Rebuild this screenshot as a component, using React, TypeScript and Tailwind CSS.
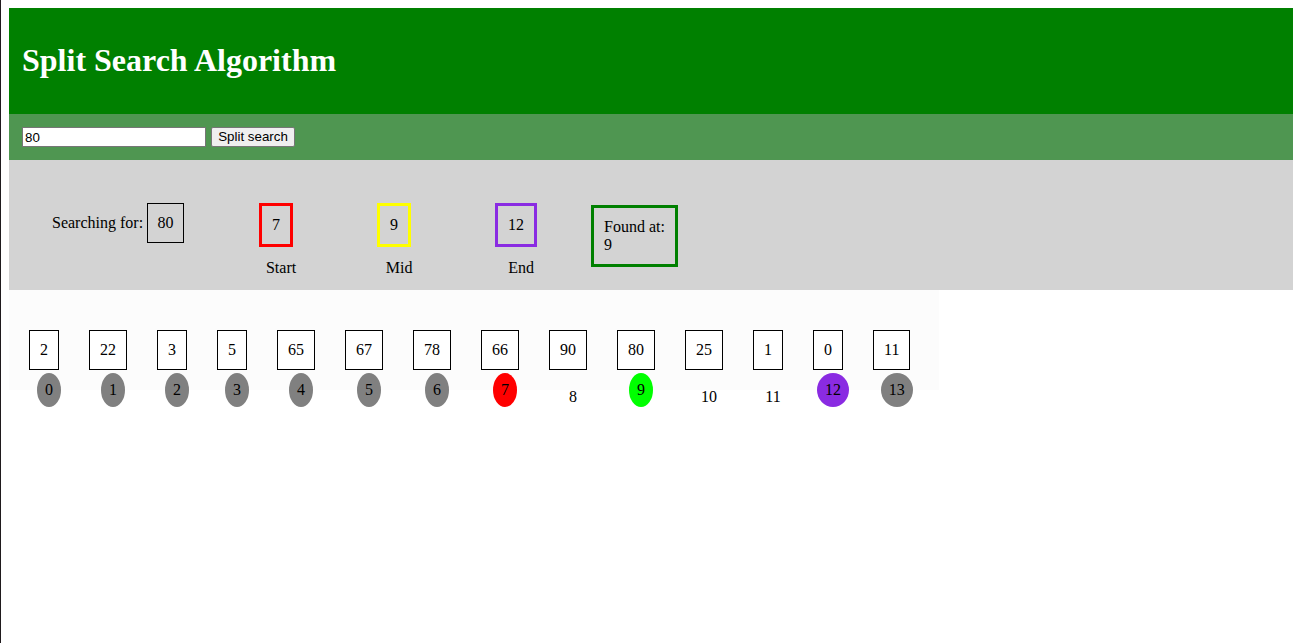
import React from 'react';

const values = [2, 22, 3, 5, 65, 67, 78, 66, 90, 80, 25, 1, 0, 11];

// index badge look per position (start / mid / end / outside range)
const badgeClass: Record<string, string> = {
  out: 'mt-[3px] p-[8px] rounded-[50%] bg-[#808080]',
  start: 'mt-[3px] p-[8px] rounded-[50%] bg-[#ff0000]',
  mid: 'mt-[3px] p-[8px] rounded-[50%] bg-[#00ff00]',
  end: 'mt-[3px] p-[8px] rounded-[50%] bg-[#8a2be2]',
  plain: 'mt-[18px]',
};

function kindFor(i: number) {
  if (i === 7) return 'start';
  if (i === 9) return 'mid';
  if (i === 12) return 'end';
  if (i === 8 || i === 10 || i === 11) return 'plain';
  return 'out';
}

function Pointer({ value, label, border }: { value: number; label: string; border: string }) {
  return (
    <div className="flex flex-col items-center">
      <div className={`border-[3px] px-[10px] py-[10px] ${border}`}>{value}</div>
      <div className="w-0 h-0 flex justify-center items-start">
        <div className="shrink-0 mt-[12px] translate-x-[5px]">{label}</div>
      </div>
    </div>
  );
}

export default function App() {
  return (
    <div className="min-h-[643px] border-l border-[#1f1a1d] pt-[8px] pl-[8px] pr-[6px] bg-white font-['Liberation_Serif',serif] text-[16px] leading-[18px] text-black">
      {/* Header */}
      <div className="h-[106px] bg-[#008000] flex items-center px-[13px] pb-[2px]">
        <h1 className="text-[32px] leading-[37px] font-bold text-white">Split Search Algorithm</h1>
      </div>

      {/* Controls */}
      <div className="h-[46px] bg-[#4f9651] flex items-center px-[13px] gap-[5px] font-['Liberation_Sans',Arial,sans-serif] text-[13.33px]">
        <input
          defaultValue="80"
          className="w-[184px] h-[20px] bg-white border border-[#767676] px-[2px] text-black outline-none"
        />
        <button className="w-[84px] h-[20px] bg-[#efefef] border border-[#767676] rounded-[2px] text-black leading-[16px]">
          Split search
        </button>
      </div>

      {/* Status panel */}
      <div className="h-[130px] bg-[#d3d3d3] flex items-start pl-[43px] pt-[43px]">
        <div className="flex items-center h-[40px]">
          <span className="mr-[4px]">Searching for:</span>
          <div className="border border-black px-[9.5px] py-[10px]">80</div>
        </div>

        <div className="ml-[75px]">
          <Pointer value={7} label="Start" border="border-[#ff0000]" />
        </div>
        <div className="ml-[84px]">
          <Pointer value={9} label="Mid" border="border-[#ffff00]" />
        </div>
        <div className="ml-[84px]">
          <Pointer value={12} label="End" border="border-[#8a2be2]" />
        </div>

        <div className="ml-[54px] mt-[2px] border-[3px] border-[#008000] p-[10px]">
          <div>Found at:</div>
          <div>9</div>
        </div>
      </div>

      {/* Array */}
      <div className="w-fit h-[100px] bg-[#fcfcfc] flex items-start pt-[40px] pl-[20px] pr-[29px] gap-[30px]">
        {values.map((v, i) => (
          <div key={i} className="flex flex-col items-center">
            <div className="border border-black bg-white px-[10px] py-[10px]">{v}</div>
            <div className="w-0 h-0 flex justify-center items-start">
              <div className={`shrink-0 translate-x-[5px] ${badgeClass[kindFor(i)]}`}>{i}</div>
            </div>
          </div>
        ))}
      </div>
    </div>
  );
}
